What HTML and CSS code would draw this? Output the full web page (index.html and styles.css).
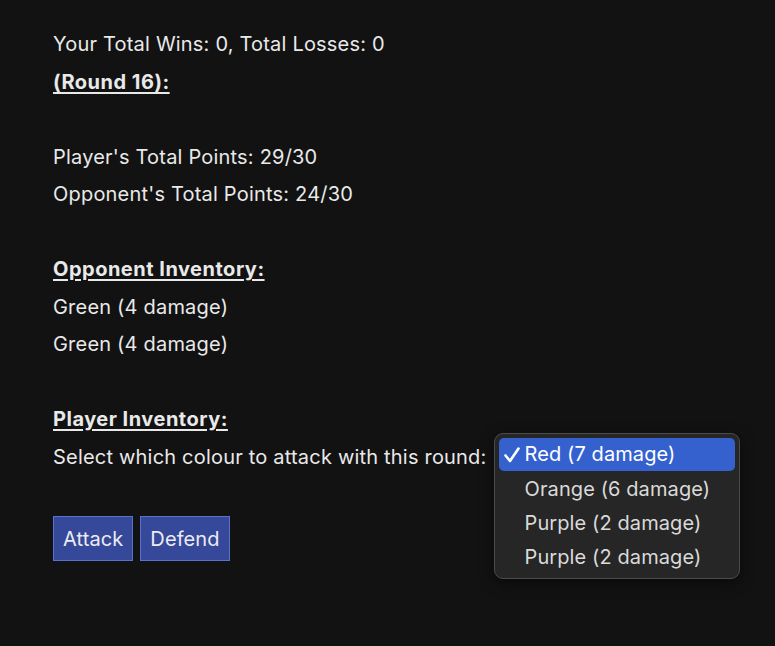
FILE: index.html
```html
<!DOCTYPE html>
<html>
<head>
<meta charset="utf-8">
<link rel="stylesheet" href="styles.css">
</head>
<body>
<main class="game">
  <div class="line">Your Total Wins: 0, Total Losses: 0</div>
  <div class="line heading">(Round 16):</div>
  <div class="line blank"></div>
  <div class="line">Player's Total Points: 29/30</div>
  <div class="line">Opponent's Total Points: 24/30</div>
  <div class="line blank"></div>
  <div class="line heading">Opponent Inventory:</div>
  <div class="line">Green (4 damage)</div>
  <div class="line">Green (4 damage)</div>
  <div class="line blank"></div>
  <div class="line heading">Player Inventory:</div>
  <div class="line select-line">
    <span>Select which colour to attack with this round:</span>
    <span class="select-wrap">
      <span class="select-box"></span>
      <ul class="popup">
        <li class="opt selected"><svg class="check" width="18" height="18" viewBox="0 0 18 18"><path d="M2.5 9.5 L7 15 L15.5 2.5" fill="none" stroke="#ffffff" stroke-width="2.6" stroke-linecap="round" stroke-linejoin="round"/></svg>Red (7 damage)</li>
        <li class="opt">Orange (6 damage)</li>
        <li class="opt">Purple (2 damage)</li>
        <li class="opt">Purple (2 damage)</li>
      </ul>
    </span>
  </div>
  <div class="actions">
    <button class="btn">Attack</button>
    <button class="btn">Defend</button>
  </div>
</main>
</body>
</html>
```
FILE: styles.css
```css
html, body {
  margin: 0;
  padding: 0;
  background: #121212;
  min-height: 100%;
}
body {
  color: #e9e9e9;
  font-family: Inter, "Noto Sans", sans-serif;
  font-size: 20px;
  letter-spacing: 0.2px;
}
.game {
  padding: 26px 0 0 53px;
  min-height: 646px;
  box-sizing: border-box;
}
.line {
  line-height: 37.5px;
  height: 37.5px;
  white-space: nowrap;
}
.heading {
  font-weight: 700;
  letter-spacing: 0.5px;
  text-decoration: underline;
  text-decoration-thickness: 2px;
  text-underline-offset: 3px;
}
.select-line {
  display: flex;
  align-items: center;
  gap: 6px;
}
.select-wrap {
  position: relative;
  display: inline-block;
}
.select-box {
  display: inline-block;
  width: 200px;
  height: 24px;
}
.popup {
  position: absolute;
  left: 1px;
  top: -6px;
  width: 236px;
  margin: 0;
  padding: 4px 4px;
  list-style: none;
  background: #262626;
  border: 1px solid #4b4b4b;
  border-radius: 9px;
  box-shadow: 0 4px 14px rgba(0,0,0,0.5);
  z-index: 2;
}
.opt {
  position: relative;
  height: 34px;
  line-height: 34px;
  padding-left: 26px;
  color: #dadada;
  border-radius: 5px;
  letter-spacing: 0.1px;
}
.opt.selected {
  background: #3561cf;
  color: #ffffff;
  height: 33px;
  line-height: 33px;
  margin-bottom: 1px;
}
.check {
  position: absolute;
  left: 4px;
  top: 8px;
}
.actions {
  display: flex;
  gap: 7px;
  margin-top: 40px;
}
.btn {
  font-family: Inter, "Noto Sans", sans-serif;
  font-size: 20px;
  letter-spacing: 0.1px;
  color: #ececf2;
  background: #36489a;
  border: 1px solid #5a72cf;
  border-radius: 0;
  height: 45px;
  padding: 0 9px;
}
```
